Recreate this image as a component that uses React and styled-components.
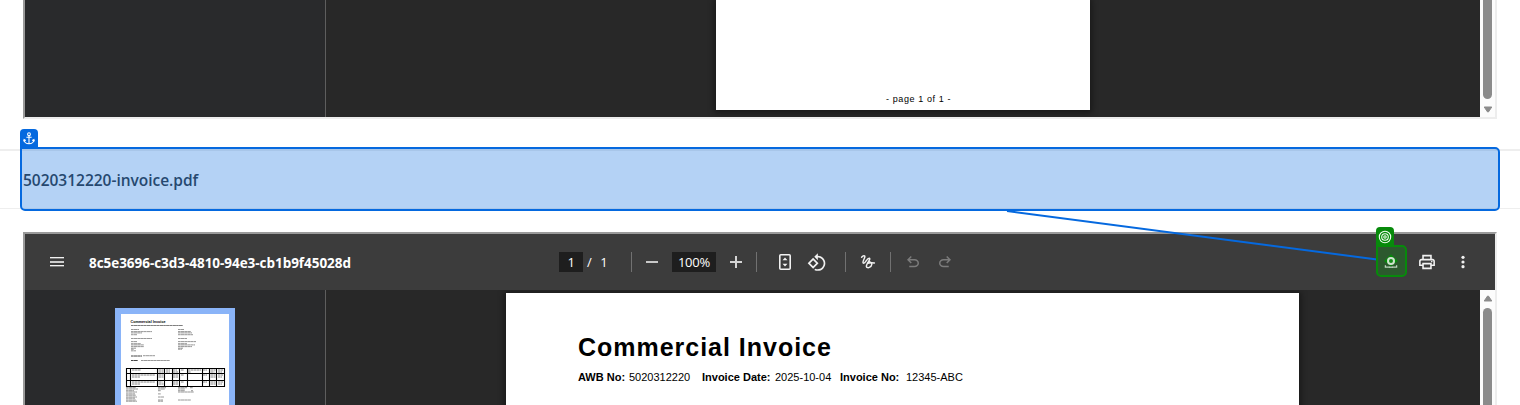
import React from "react";
import styled, { createGlobalStyle } from "styled-components";

const Global = createGlobalStyle`
  * { box-sizing: border-box; }
  html, body { margin: 0; overflow: hidden; background: #fff; }
`;

const Screen = styled.main`
  position: relative;
  display: flex;
  flex-direction: column;
  width: 1520px;
  height: 405px;
  overflow: hidden;
  background: #fff;
  font-family: "Open Sans", "Noto Sans", sans-serif;
`;

const Viewer = styled.section`
  display: flex;
  flex-direction: column;
  flex: none;
  height: ${(p) => p.$height}px;
  margin: 0 23px;
  overflow: hidden;
  border: 2px solid;
  border-color: #9a9a9a #ededed #ededed #9a9a9a;
  border-top-width: ${(p) => (p.$cutTop ? 0 : 2)}px;
  border-bottom-width: ${(p) => (p.$cutTop ? 2 : 0)}px;
`;

const Body = styled.div`
  display: flex;
  flex: 1;
  min-height: 0;
`;

const Sidebar = styled.aside`
  display: flex;
  justify-content: center;
  align-items: flex-start;
  flex: none;
  width: 301px;
  padding-top: 18px;
  background: #292a2c;
  border-right: 1px solid #5e5e5e;
`;

const Canvas = styled.div`
  display: flex;
  flex: 1;
  overflow: hidden;
  background: #282828;
`;

const Sheet = styled.article`
  flex: none;
  width: ${(p) => p.$width}px;
  height: ${(p) => p.$height}px;
  margin-left: ${(p) => p.$left}px;
  margin-top: ${(p) => p.$top || 0}px;
  padding: ${(p) => p.$padding};
  background: #fff;
  color: #000;
  font-family: "Liberation Sans", Arial, sans-serif;
  box-shadow: 0 1px 6px 2px rgba(0, 0, 0, 0.4);
`;

const PageNumber = styled.p`
  margin: 0;
  padding-left: 170px;
  font-size: 9px;
  line-height: 12px;
  letter-spacing: 0.6px;
  white-space: nowrap;
`;

const InvoiceTitle = styled.h1`
  margin: 0;
  font-size: 25px;
  line-height: 30px;
  font-weight: 700;
  letter-spacing: 0.98px;
  white-space: nowrap;
`;

const Facts = styled.dl`
  display: flex;
  margin: 8px 0 0;
  font-size: 11px;
  line-height: 14px;
  white-space: nowrap;
`;

const Fact = styled.div`
  display: flex;
  flex: none;
  gap: 4px;
  width: ${(p) => p.$width}px;
  dt { font-weight: 700; width: ${(p) => p.$label}px; flex: none; }
  dd { margin: 0; }
`;

const ScrollTrack = styled.div`
  display: flex;
  flex-direction: column;
  align-items: center;
  justify-content: ${(p) => (p.$end ? "flex-end" : "flex-start")};
  flex: none;
  width: 15px;
  padding: ${(p) => (p.$end ? "0 0 4px" : "5px 0 0")};
  gap: ${(p) => (p.$end ? 7 : 6)}px;
  background: #fcfcfc;
  svg { display: block; flex: none; }
`;

const ScrollThumb = styled.div`
  flex: none;
  width: 9px;
  height: 140px;
  border-radius: 5px;
  background: #8b8b8b;
`;

const FileRow = styled.header`
  display: flex;
  align-items: center;
  flex: none;
  height: 60px;
  margin: 30px 0 23px;
  padding-left: 23px;
  border-top: 2px solid #eeeeee;
  border-bottom: 1px solid #eeeeee;
`;

const FileName = styled.h2`
  margin: 0;
  color: #343a40;
  font-size: 15.5px;
  line-height: 22px;
  font-weight: 600;
  letter-spacing: -0.02px;
  white-space: nowrap;
`;

const Toolbar = styled.div`
  display: flex;
  align-items: center;
  flex: none;
  height: 56px;
  padding-left: 22px;
  background: #3c3c3c;
  color: #f1f1f1;
`;

const IconButton = styled.span`
  display: flex;
  align-items: center;
  justify-content: center;
  flex: none;
  width: 20px;
  height: 20px;
  margin-left: ${(p) => p.$gap || 0}px;
  color: ${(p) => (p.$muted ? "#7b7b7b" : "#f1f1f1")};
  svg { display: block; flex: none; }
`;

const DocTitle = styled.strong`
  width: 470px;
  margin-left: 22px;
  padding-top: 1px;
  color: #fff;
  font-size: 13.5px;
  font-weight: 700;
  line-height: 20px;
  letter-spacing: -0.04px;
  white-space: nowrap;
`;

const Field = styled.span`
  width: ${(p) => p.$width}px;
  height: 20px;
  margin-left: ${(p) => p.$gap || 0}px;
  background: #1e1e1e;
  color: #fff;
  text-align: center;
  font-size: 13px;
  line-height: 21px;
  letter-spacing: -0.2px;
`;

const PageTotal = styled.span`
  width: 44px;
  padding-left: 4px;
  color: #fff;
  font-size: 13px;
  line-height: 20px;
  word-spacing: 5px;
  white-space: nowrap;
`;

const Separator = styled.i`
  flex: none;
  width: 1px;
  height: 20px;
  margin-left: ${(p) => p.$gap || 0}px;
  background: #717171;
`;

const Thumbnail = styled.div`
  width: 120px;
  height: 130px;
  flex: none;
  border: 6px solid #8ab4f8;
  background: #fff;
  svg { display: block; }
`;

const Mark = styled.div`
  position: absolute;
  left: ${(p) => p.$x}px;
  top: ${(p) => p.$y}px;
  width: ${(p) => p.$w}px;
  height: ${(p) => p.$h}px;
  border: 2px solid ${(p) => p.$color};
  border-radius: 0 5px 5px 5px;
  background: ${(p) => p.$fill};
`;

const MarkTag = styled.div`
  position: absolute;
  left: -2px;
  top: -20px;
  display: flex;
  align-items: center;
  justify-content: center;
  width: 18px;
  height: 19px;
  border-radius: 4px 4px 0 0;
  background: ${(p) => p.$color};
  color: #fff;
`;

const Connector = styled.svg`
  position: absolute;
  left: 0;
  top: 0;
  pointer-events: none;
`;

const BLUE = "#0569df";
const GREEN = "#078a0b";

const MenuIcon = () => (
  <svg width="14" height="10" fill="currentColor" shapeRendering="crispEdges">
    <path d="M0 0h14v1H0zM0 8h14v1H0z" />
    <path d="M0 1h14v1H0zM0 9h14v1H0z" opacity=".35" />
    <path d="M0 4h14v2H0z" opacity=".8" />
  </svg>
);

const FitPageIcon = () => (
  <svg width="12" height="16" viewBox="0 0 12 16">
    <rect x=".8" y=".8" width="10.4" height="14.4" rx="1" fill="none" stroke="currentColor" strokeWidth="1.6" />
    <path d="M6 3.6 8.5 6.2h-5zM6 12.4 8.5 9.8h-5z" fill="currentColor" />
  </svg>
);

const RotateIcon = () => (
  <svg width="20" height="20" viewBox="0 -0.6 24 24" fill="currentColor">
    <path d="M7.34 6.41.86 12.9l6.49 6.48 6.49-6.48-6.5-6.49zM3.69 12.9l3.66-3.66L11 12.9l-3.66 3.66-3.65-3.66zm15.67-6.26C17.61 4.88 15.3 4 13 4V.76L8.76 5 13 9.24V6c1.79 0 3.58.68 4.95 2.05 2.73 2.73 2.73 7.17 0 9.9C16.58 19.32 14.79 20 13 20c-.97 0-1.94-.21-2.84-.61l-1.49 1.49C10.02 21.62 11.51 22 13 22c2.3 0 4.61-.88 6.36-2.64 3.52-3.51 3.52-9.21 0-12.72z" />
  </svg>
);

const InkIcon = () => (
  <svg width="16" height="16" viewBox="0 0 16 16" fill="none" stroke="currentColor" strokeWidth="1.45" strokeLinecap="round" strokeLinejoin="round">
    <path d="M1.6 3.2C3.1 1.3 5.2 1 4.8 3.2 4.4 5.2 1.8 8.2 3.4 9.2 5.4 10 6.8 4 9.2 4.2c2.4.6-3.4 5.8-2.8 8.4 1 2.4 5 .6 5.4-2.2.3-2.4-2.6-3-4.2-1.5" />
    <path d="M7.6 9.3c2.4-1 4.4-.7 6.8-.3" />
  </svg>
);

const HistoryIcon = ({ flip }) => (
  <svg width="18" height="18" viewBox="0 -960 960 960" fill="currentColor" transform={flip ? "scale(-1 1)" : undefined}>
    <path d="M280-200v-80h284q63 0 109.5-40T720-420q0-60-46.5-100T564-560H312l104 104-56 56-200-200 200-200 56 56-104 104h252q97 0 167 63t70 157q0 94-70 157t-167 63H280Z" />
  </svg>
);

const DownloadIcon = () => (
  <svg width="20" height="20" viewBox="0 0 20 20">
    <path d="M4.4 14v2.6h11.2V14" fill="none" stroke="#eef3ee" strokeWidth="1.3" />
    <path d="M10 2.8v9M6.5 8.5 10 12l3.5-3.5" fill="none" stroke="#eef3ee" strokeWidth="1.8" />
  </svg>
);

const PrintIcon = () => (
  <svg width="20" height="20" viewBox="-0.6 -0.6 25.2 25.2" fill="currentColor">
    <path d="M19 8h-1V3H6v5H5c-1.66 0-3 1.34-3 3v6h4v4h12v-4h4v-6c0-1.66-1.34-3-3-3zM8 5h8v3H8V5zm8 14H8v-4h8v4zm4-4h-2v-2H6v2H4v-4c0-.55.45-1 1-1h14c.55 0 1 .45 1 1v4z" />
    <circle cx="18" cy="11.5" r="1" />
  </svg>
);

const MoreIcon = () => (
  <svg width="4" height="14" fill="currentColor">
    <circle cx="2" cy="2.3" r="1.6" />
    <circle cx="2" cy="7" r="1.6" />
    <circle cx="2" cy="11.7" r="1.6" />
  </svg>
);

const AnchorIcon = () => (
  <svg width="12" height="13" viewBox="0 0 12 13" fill="none" stroke="currentColor" strokeWidth="1.1">
    <circle cx="6" cy="2.2" r="1.4" />
    <path d="M6 3.6v8M3.4 5.3h5.2M1 7.8c.3 2.3 2.2 4 5 4s4.7-1.7 5-4M.6 9.3 1.1 7.6l1.7.8M11.4 9.3l-.5-1.7-1.7.8" />
  </svg>
);

const TargetIcon = () => (
  <svg width="14" height="14" viewBox="0 0 14 14" fill="none" stroke="#f3fff3" strokeWidth="1.1">
    <circle cx="7" cy="7" r="5.7" />
    <circle cx="7" cy="7" r="3.3" />
    <circle cx="7" cy="7" r="1.2" />
  </svg>
);

const PinGlyph = () => (
  <svg width="27" height="28" viewBox="0 0 27 28">
    <path d="M13 7.3 20 14l-7 5.3L6 14z" fill="#078a0b" />
    <circle cx="13" cy="14" r="3" fill="#178a1b" stroke="#cfe3cf" strokeWidth="2" />
    <path d="M7.4 18.3v1.9h4.2M18.6 18.3v1.9h-4.2" fill="none" stroke="#bcd5be" strokeWidth="1.3" />
    <path d="M11 20.2h4" stroke="#bcd5be" strokeWidth="1.3" />
  </svg>
);

const Arrow = ({ down }) => (
  <svg width="10" height="7" viewBox="0 0 10 7">
    <path
      d={down ? "M1.2 1h7.6L5.4 6h-.8z" : "M1.2 6h7.6L5.4 1h-.8z"}
      fill="#8b8b8b" stroke="#8b8b8b" strokeWidth="1" strokeLinejoin="round"
    />
  </svg>
);

/* [x, y, width] of each line of print on the miniature page */
const printLines = [
  [10, 15.5, 8], [57, 15.5, 6], [10, 17.6, 21], [57, 17.6, 13], [10, 18.9, 11], [57, 18.9, 14],
  [10, 20.7, 6], [57, 20.7, 15], [10, 24.5, 21], [57, 24.5, 9], [10, 27.6, 6], [57, 27.6, 18],
  [10, 29.7, 10], [57, 29.7, 9], [10, 30.9, 13], [57, 30.9, 17], [10, 32.6, 13], [57, 32.6, 14],
  [10, 34.2, 5], [57, 34.2, 5], [10, 35.2, 3], [57, 35.2, 4], [10, 36.8, 5],
  [5, 73.7, 10], [5, 75, 12], [37, 73.7, 8], [37, 75, 7], [57, 73.7, 9], [69, 73.7, 3], [57, 75, 7],
  [5, 76.7, 8], [5, 78, 11], [37, 76.7, 3], [57, 76.7, 7], [70, 76.7, 2], [57, 78, 16],
  [5, 79.9, 9], [5, 81.2, 10], [37, 79.9, 3], [5, 83, 11], [5, 84.2, 9], [37, 83, 6],
  [5, 86, 10], [5, 87.2, 11], [37, 86, 5], [37, 87.2, 5], [57, 86, 13],
];
const columns = [5.5, 9.5, 36.5, 43.5, 51.5, 58.5, 66.5, 81.5, 88.5, 95.5, 103.5];

const MiniPage = () => (
  <svg width="108" height="118" viewBox="0 0 108 118">
    <text x="9.5" y="9" fontFamily="Liberation Sans" fontWeight="700" fontSize="3.7" textLength="35">Commercial Invoice</text>
    <g stroke="#333" strokeWidth=".7" strokeDasharray="2.6 .25 3.4 .2" opacity=".72">
      <path d="M10 11.5h52" stroke="#000" />
      {printLines.map(([x, y, w]) => (
        <path key={`${x}-${y}`} d={`M${x} ${y}h${w}`} />
      ))}
      <path d="M10 42h11M10 46.5h7" stroke="#000" strokeWidth="1" />
      <path d="M22 41.7h12M20 46.5h29" />
    </g>
    <g stroke="#555" strokeWidth=".7" strokeDasharray="2.5 .4">
      <path d="M11 56h9M37.5 56h5M45 56h4M52 56h4M60 56h3M67 56h13M82 56h4M89.5 56h5M97 56h5M37.5 58h5M45 58h4M52 58h5M67 58h3M89.5 58h4M97 58h4" />
      <path d="M11 61h23M11 63h8M37.5 61h5M52 61h5M60 61h3M82 61h4M89.5 61h5M97 61h5M37.5 63h5M52 63h5M89.5 63h5M97 63h4" />
      <path d="M11 68h23M11 70h8M37.5 68h4M52 68h5M60 68h3M82 68h4M89.5 68h5M97 68h5M37.5 70h5M52 70h5M89.5 70h5M97 70h4" />
    </g>
    <g stroke="#000" strokeWidth="1.1">
      <path d="M5 54.5h99M5 59.5h99M5 66.5h99M5 72.5h99" />
      {columns.map((x) => <path key={x} d={`M${x} 54v19`} />)}
    </g>
  </svg>
);

export default function App() {
  return (
    <Screen>
      <Global />
      <Viewer $height={119} $cutTop>
        <Body>
          <Sidebar />
          <Canvas>
            <Sheet $width={374} $height={110} $left={390} $padding="93px 0 0">
              <PageNumber>- page 1 of 1 -</PageNumber>
            </Sheet>
          </Canvas>
          <ScrollTrack $end>
            <ScrollThumb />
            <Arrow down />
          </ScrollTrack>
        </Body>
      </Viewer>

      <FileRow>
        <FileName>5020312220-invoice.pdf</FileName>
      </FileRow>

      <Viewer $height={173}>
        <Toolbar>
          <IconButton><MenuIcon /></IconButton>
          <DocTitle>8c5e3696-c3d3-4810-94e3-cb1b9f45028d</DocTitle>
          <Field $width={24}>1</Field>
          <PageTotal>/ 1</PageTotal>
          <Separator $gap={4} />
          <IconButton $gap={10}>
            <svg width="12" height="2"><path d="M0 0h12v2H0z" fill="#c8c8c8" /></svg>
          </IconButton>
          <Field $width={44} $gap={10}>100%</Field>
          <IconButton $gap={10}>
            <svg width="12" height="12"><path d="M5 0h2v5h5v2H7v5H5V7H0V5h5z" fill="#d4d4d4" /></svg>
          </IconButton>
          <Separator $gap={10} />
          <IconButton $gap={18}><FitPageIcon /></IconButton>
          <IconButton $gap={12}><RotateIcon /></IconButton>
          <Separator $gap={18} />
          <IconButton $gap={12}><InkIcon /></IconButton>
          <Separator $gap={12} />
          <IconButton $gap={12} $muted><HistoryIcon /></IconButton>
          <IconButton $gap={12} $muted><HistoryIcon flip /></IconButton>
          <IconButton $gap={426}><DownloadIcon /></IconButton>
          <IconButton $gap={16}><PrintIcon /></IconButton>
          <IconButton $gap={16}><MoreIcon /></IconButton>
        </Toolbar>
        <Body>
          <Sidebar>
            <Thumbnail><MiniPage /></Thumbnail>
          </Sidebar>
          <Canvas>
            <Sheet $width={793} $height={140} $left={180} $top={3} $padding="39px 0 0 72px">
              <InvoiceTitle>Commercial Invoice</InvoiceTitle>
              <Facts>
                <Fact $width={124} $label={47}><dt>AWB No:</dt><dd>5020312220</dd></Fact>
                <Fact $width={138} $label={69}><dt>Invoice Date:</dt><dd>2025-10-04</dd></Fact>
                <Fact $width={130} $label={62}><dt>Invoice No:</dt><dd>12345-ABC</dd></Fact>
              </Facts>
            </Sheet>
          </Canvas>
          <ScrollTrack>
            <Arrow />
            <ScrollThumb />
          </ScrollTrack>
        </Body>
      </Viewer>

      <Mark $x={20} $y={147} $w={1480} $h={64} $color={BLUE} $fill="rgba(5, 105, 223, 0.3)">
        <MarkTag $color={BLUE}><AnchorIcon /></MarkTag>
      </Mark>
      <Connector width="1520" height="405">
        <path d="M1007 211 1377 259.5" stroke={BLUE} strokeWidth="2" />
      </Connector>
      <Mark $x={1376} $y={245} $w={31} $h={32} $color={GREEN} $fill="#2c592e">
        <MarkTag $color={GREEN}><TargetIcon /></MarkTag>
        <PinGlyph />
      </Mark>
    </Screen>
  );
}
